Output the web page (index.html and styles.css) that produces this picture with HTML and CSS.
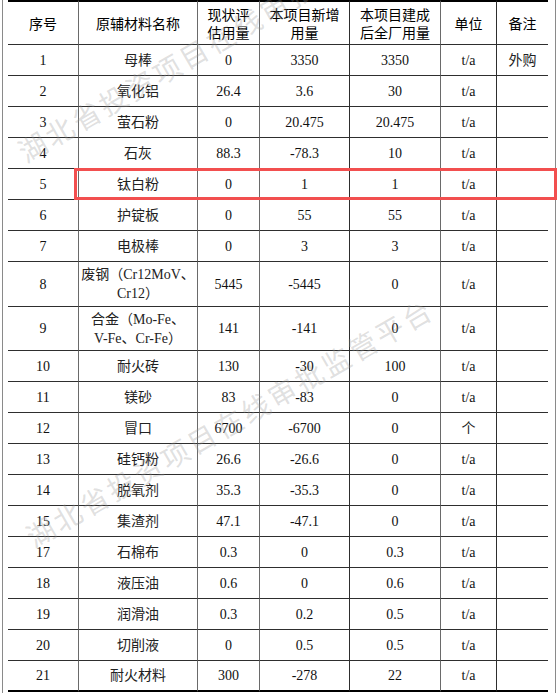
FILE: index.html
```html
<!DOCTYPE html>
<html lang="zh-CN">
<head>
<meta charset="utf-8">
<title>原辅材料用量表</title>
<link rel="stylesheet" href="styles.css">
</head>
<body>
<div class="frame">
  <table class="mat">
    <colgroup>
      <col class="c1"><col class="c2"><col class="c3"><col class="c4"><col class="c5"><col class="c6"><col class="c7">
    </colgroup>
    <thead>
      <tr class="head">
        <th>序号</th>
        <th class="g">原辅材料名称</th>
        <th class="g">现状评<br>估用量</th>
        <th class="g">本项目新增<br>用量</th>
        <th>本项目建成<br>后全厂用量</th>
        <th class="g">单位</th>
        <th>备注</th>
      </tr>
    </thead>
    <tbody>
      <tr><td>1</td><td class="cn g">母棒</td><td class="g">0</td><td class="g">3350</td><td>3350</td><td class="g">t/a</td><td class="cn">外购</td></tr>
      <tr><td>2</td><td class="cn g">氧化铝</td><td class="g">26.4</td><td class="g">3.6</td><td>30</td><td class="g">t/a</td><td></td></tr>
      <tr><td>3</td><td class="cn g">萤石粉</td><td class="g">0</td><td class="g">20.475</td><td>20.475</td><td class="g">t/a</td><td></td></tr>
      <tr><td>4</td><td class="cn g">石灰</td><td class="g">88.3</td><td class="g">-78.3</td><td>10</td><td class="g">t/a</td><td></td></tr>
      <tr><td>5</td><td class="cn g">钛白粉</td><td class="g">0</td><td class="g">1</td><td>1</td><td class="g">t/a</td><td></td></tr>
      <tr><td>6</td><td class="cn g">护锭板</td><td class="g">0</td><td class="g">55</td><td>55</td><td class="g">t/a</td><td></td></tr>
      <tr><td>7</td><td class="cn g">电极棒</td><td class="g">0</td><td class="g">3</td><td>3</td><td class="g">t/a</td><td></td></tr>
      <tr class="tall"><td>8</td><td class="cn g">废钢（Cr12MoV、<br>Cr12）</td><td class="g">5445</td><td class="g">-5445</td><td>0</td><td class="g">t/a</td><td></td></tr>
      <tr class="tall2"><td>9</td><td class="cn g">合金（Mo-Fe、<br>V-Fe、Cr-Fe）</td><td class="g">141</td><td class="g">-141</td><td>0</td><td class="g">t/a</td><td></td></tr>
      <tr><td>10</td><td class="cn g">耐火砖</td><td class="g">130</td><td class="g">-30</td><td>100</td><td class="g">t/a</td><td></td></tr>
      <tr><td>11</td><td class="cn g">镁砂</td><td class="g">83</td><td class="g">-83</td><td>0</td><td class="g">t/a</td><td></td></tr>
      <tr><td>12</td><td class="cn g">冒口</td><td class="g">6700</td><td class="g">-6700</td><td>0</td><td class="g cn">个</td><td></td></tr>
      <tr><td>13</td><td class="cn g">硅钙粉</td><td class="g">26.6</td><td class="g">-26.6</td><td>0</td><td class="g">t/a</td><td></td></tr>
      <tr><td>14</td><td class="cn g">脱氧剂</td><td class="g">35.3</td><td class="g">-35.3</td><td>0</td><td class="g">t/a</td><td></td></tr>
      <tr><td>15</td><td class="cn g">集渣剂</td><td class="g">47.1</td><td class="g">-47.1</td><td>0</td><td class="g">t/a</td><td></td></tr>
      <tr><td>17</td><td class="cn g">石棉布</td><td class="g">0.3</td><td class="g">0</td><td>0.3</td><td class="g">t/a</td><td></td></tr>
      <tr><td>18</td><td class="cn g">液压油</td><td class="g">0.6</td><td class="g">0</td><td>0.6</td><td class="g">t/a</td><td></td></tr>
      <tr><td>19</td><td class="cn g">润滑油</td><td class="g">0.3</td><td class="g">0.2</td><td>0.5</td><td class="g">t/a</td><td></td></tr>
      <tr><td>20</td><td class="cn g">切削液</td><td class="g">0</td><td class="g">0.5</td><td>0.5</td><td class="g">t/a</td><td></td></tr>
      <tr class="last"><td>21</td><td class="cn g">耐火材料</td><td class="g">300</td><td class="g">-278</td><td>22</td><td class="g">t/a</td><td></td></tr>
    </tbody>
  </table>
  <div class="highlight"></div>
  <div class="wm wm1">湖北省投资项目在线审批监管平台</div>
  <div class="wm wm2">湖北省投资项目在线审批监管平台</div>
</div>
</body>
</html>
```
FILE: styles.css
```css
html, body {
  margin: 0;
  padding: 0;
  background: #fff;
}
body {
  width: 558px;
  height: 693px;
  overflow: hidden;
}
.frame {
  position: relative;
  margin-left: 2px;
  width: 552px;
  height: 693px;
  border-left: 1px solid #8a8a8a;
  border-right: 1px solid #8a8a8a;
}
.mat {
  margin-left: 5px;
  width: 540px;
  table-layout: fixed;
  border-collapse: separate;
  border-spacing: 0;
  font-family: "Liberation Serif", "Noto Sans CJK SC", serif;
  font-size: 14px;
  color: #111;
}
.c1 { width: 70px; }
.c2 { width: 119px; }
.c3 { width: 62px; }
.c4 { width: 90px; }
.c5 { width: 91px; }
.c6 { width: 56px; }
.c7 { width: 52px; }
.mat th,
.mat td {
  padding: 0 2px;
  text-align: center;
  vertical-align: middle;
  border-bottom: 1px solid #2e2e2e;
  border-left: 1px solid #2e2e2e;
  line-height: 19px;
}
.mat th:first-child,
.mat td:first-child {
  border-left: none;
}
.mat th.g,
.mat td.g {
  border-left: 1px solid #6a6a6a;
}
.mat th {
  font-family: "Noto Sans CJK SC", sans-serif;
  font-weight: 400;
  color: #000;
  border-top: 2px solid #000;
  line-height: 18px;
}
.head { height: 45px; }
.mat tbody tr { height: 31px; }
.mat tbody tr.tall { height: 45px; }
.mat tbody tr.tall2 { height: 44px; }
.mat tbody tr.last td { border-bottom: 2px solid #000; }
.cn {
  font-family: "Liberation Serif", "Noto Sans CJK SC", serif;
  color: #222;
}
.mat td.cn { line-height: 19px; }
.highlight {
  position: absolute;
  left: 71px;
  top: 168px;
  width: 483px;
  height: 32px;
  box-sizing: border-box;
  border: 3px solid #f24f4f;
  pointer-events: none;
}
.wm {
  position: absolute;
  white-space: nowrap;
  font-family: "Noto Sans CJK SC", sans-serif;
  font-size: 28px;
  line-height: 28px;
  letter-spacing: 3px;
  color: rgba(150, 150, 150, 0.3);
  transform-origin: 0 50%;
  transform: rotate(-30deg);
  pointer-events: none;
}
.wm1 { left: 17px; top: 139px; }
.wm2 { left: 25px; top: 524px; }
```
